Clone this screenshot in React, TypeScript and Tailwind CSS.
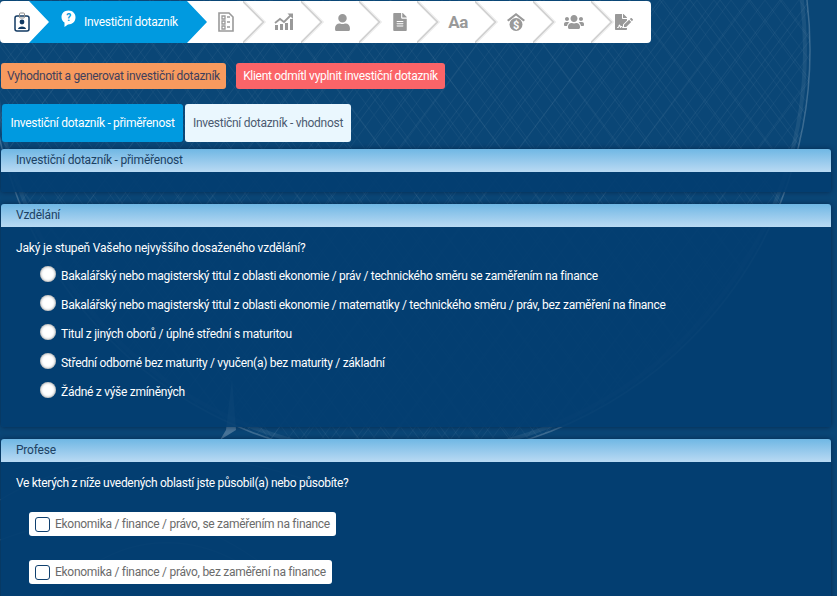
import { FaFileAlt, FaFileSignature, FaUser, FaUsers } from "react-icons/fa";

const FONT = "font-['Roboto',sans-serif]";

const EDUCATION = [
	"Bakalářský nebo magisterský titul z oblasti ekonomie / práv / technického směru se zaměřením na finance",
	"Bakalářský nebo magisterský titul z oblasti ekonomie / matematiky / technického směru / práv, bez zaměření na finance",
	"Titul z jiných oborů / úplné střední s maturitou",
	"Střední odborné bez maturity / vyučen(a) bez maturity / základní",
	"Žádné z výše zmíněných",
];

function Backdrop() {
	return (
		<svg className="absolute inset-0 h-full w-full" viewBox="0 0 837 596" aria-hidden>
			<defs>
				<pattern id="mesh" width="30" height="40" patternUnits="userSpaceOnUse">
					<path d="M0 0L30 40M30 0L0 40" stroke="#ffffff" strokeOpacity="0.1" strokeWidth="0.5" fill="none" />
				</pattern>
				<pattern id="mesh2" width="17" height="23" patternUnits="userSpaceOnUse">
					<path d="M0 0L17 23M17 0L0 23" stroke="#ffffff" strokeOpacity="0.07" strokeWidth="0.5" fill="none" />
				</pattern>
			</defs>
			<circle cx="400" cy="50" r="410" fill="url(#mesh)" />
			<circle cx="400" cy="50" r="410" fill="url(#mesh2)" />
			<circle cx="400" cy="50" r="410" fill="none" stroke="#ffffff" strokeOpacity="0.2" strokeWidth="1.5" />
			<circle cx="400" cy="50" r="405" fill="none" stroke="#ffffff" strokeOpacity="0.07" strokeWidth="4" />
			<path d="M0 500C80 450 220 440 330 490M0 540C110 500 200 500 300 596M60 596C110 530 210 520 280 596" stroke="#ffffff" strokeOpacity="0.12" fill="none" />
			<path d="M232 380L226 430L220 440L236 430Z" fill="#ffffff" fillOpacity="0.25" />
		</svg>
	);
}

function Chevron() {
	return (
		<svg className="absolute top-0 right-[-2px] h-[42px] w-[24px]" viewBox="0 0 24 42" aria-hidden>
			<path d="M0 0L21 21L0 42" fill="none" stroke="#d2d2d2" strokeWidth="2.5" />
			<path d="M1 0L22 21L1 42" fill="none" stroke="#ececec" strokeWidth="1" />
		</svg>
	);
}

function ChecklistIcon() {
	return (
		<svg width="16" height="20" viewBox="0 0 16 20" aria-hidden>
			<path d="M1 1H11L15 5V19H1Z" fill="#fff" stroke="#9a9a9a" strokeWidth="1.6" />
			<path d="M4 4H7V7H4ZM4 9H7V12H4ZM4 14H7V17H4ZM9 5H12M9 10H12M9 15H12" fill="none" stroke="#9a9a9a" strokeWidth="1.3" />
		</svg>
	);
}

function GrowthIcon() {
	return (
		<svg width="20" height="18" viewBox="0 0 20 18" aria-hidden>
			<path d="M1 17V12H4V17ZM6 17V11H9V17ZM11 17V10H14V17ZM16 17V6H19V17Z" fill="#999" />
			<path d="M1 10L6 6L10 9L17 2" fill="none" stroke="#999" strokeWidth="1.8" />
			<path d="M13.5 0.5H19V6Z" fill="#999" />
		</svg>
	);
}

function SavingsIcon() {
	return (
		<svg width="20" height="20" viewBox="0 0 20 20" aria-hidden>
			<path d="M1 8L10 1L19 8L17.5 9.5L10 3.6L2.5 9.5Z" fill="#999" />
			<circle cx="10" cy="12.5" r="6.5" fill="#999" />
			<text x="10" y="16.5" textAnchor="middle" fontSize="11" fontWeight="700" fill="#fff" fontFamily="Roboto, sans-serif">
				$
			</text>
		</svg>
	);
}

const STEPS = [
	<ChecklistIcon key="list" />,
	<GrowthIcon key="chart" />,
	<FaUser key="user" className="text-[17px] text-[#999]" />,
	<FaFileAlt key="file" className="text-[18px] text-[#999]" />,
	<span key="aa" className="text-[17px] leading-none font-bold tracking-[-0.5px] text-[#999]">
		Aa
	</span>,
	<SavingsIcon key="savings" />,
	<FaUsers key="users" className="text-[20px] text-[#999]" />,
];

function Stepper() {
	return (
		<nav className="flex h-[42px] w-[651px] rounded-[4px] bg-white">
			<div className="flex w-[29px] shrink-0 items-center justify-end">
				<svg className="mr-[-1px] shrink-0" width="16" height="20" viewBox="0 0 16 20" aria-hidden>
					<rect x="1" y="4" width="14" height="15" rx="2" fill="#fff" stroke="#123a63" strokeWidth="1.5" />
					<rect x="5.5" y="1" width="5" height="5" rx="1" fill="none" stroke="#8a8a8a" />
					<circle cx="8" cy="10" r="2.4" fill="#123a63" />
					<path d="M4 17C4 13.5 12 13.5 12 17Z" fill="#123a63" />
				</svg>
			</div>
			<div className="flex w-[178px] shrink-0 items-center bg-[#009ae0] pb-[4px] pl-[32px] text-white [clip-path:polygon(0_0,158px_0,178px_50%,158px_100%,0_100%,20px_50%)]">
				<svg width="15" height="20" viewBox="0 0 15 20" aria-hidden>
					<path d="M7.5 0.5C3.3 0.5 0.5 3.3 0.5 7C0.5 10 2 11.5 3.5 12.5V17L7 14.5C11.5 14.5 14.5 11.5 14.5 7.3C14.5 3.3 11.5 0.5 7.5 0.5Z" fill="#fff" />
					<text x="7.5" y="11" textAnchor="middle" fontSize="10" fontWeight="700" fill="#009ae0" fontFamily="Roboto, sans-serif">
						?
					</text>
				</svg>
				<span className="mt-[4px] ml-[8px] whitespace-nowrap text-[12px] tracking-[-0.3px]">Investiční dotazník</span>
			</div>
			{STEPS.map((icon, i) => (
				<div key={i} className="relative flex w-[58px] shrink-0 items-center justify-center pr-[20px]">
					{icon}
					<Chevron />
				</div>
			))}
			<div className="flex flex-1 items-center justify-center pr-[16px]">
				<FaFileSignature className="text-[18px] text-[#999]" />
			</div>
		</nav>
	);
}

function Panel({ title, className, children }: { title: string; className?: string; children?: React.ReactNode }) {
	return (
		<section className={`ml-px w-[830px] rounded-[3px] bg-[#033e71]/92 shadow-[0_0_5px_rgba(0,20,50,0.6)] ${className ?? ""}`}>
			<h2 className="h-[23px] rounded-t-[3px] bg-gradient-to-b from-[#6fb7e4] to-[#b9daf3] pl-[15px] text-[12px] leading-[23px] font-normal tracking-[-0.2px] text-[#1c4163]">
				{title}
			</h2>
			{children}
		</section>
	);
}

export default function App() {
	return (
		<div className={`relative h-screen overflow-hidden bg-[#0a4676] text-[12px] tracking-[-0.28px] ${FONT}`}>
			<Backdrop />
			<div className="relative pt-px">
				<Stepper />

				<div className="mt-[20px] flex gap-[10px] pl-px">
					<button className="h-[26px] w-[225px] rounded-[3px] bg-[#f79a5e] text-center text-[12px] tracking-[-0.3px] text-[#3f3f5c]">
						Vyhodnotit a generovat investiční dotazník
					</button>
					<button className="h-[26px] w-[209px] rounded-[3px] bg-[#fb6468] text-center text-[12px] tracking-[-0.3px] text-white">
						Klient odmítl vyplnit investiční dotazník
					</button>
				</div>

				<div className="mt-[15px] flex gap-[2px] pl-[2px]">
					<button className="h-[38px] w-[181px] rounded-[3px] bg-[#009ae0] text-[12px] text-white">
						Investiční dotazník - přiměřenost
					</button>
					<button className="h-[38px] w-[166px] rounded-[3px] bg-[#eaf7fe] text-[12px] text-[#4a5a70]">
						Investiční dotazník - vhodnost
					</button>
				</div>

				<Panel title="Investiční dotazník - přiměřenost" className="mt-[7px] h-[43px]" />

				<Panel title="Vzdělání" className="mt-[12px] h-[223px]">
					<p className="pt-[13px] pl-[15px] leading-[16px] tracking-[-0.18px] text-white">
						Jaký je stupeň Vašeho nejvyššího dosaženého vzdělání?
					</p>
					<ul className="mt-[10px] flex flex-col gap-[13px] pl-[39px]">
						{EDUCATION.map((label) => (
							<li key={label} className="flex h-[16px] items-center gap-[5px] whitespace-nowrap text-white">
								<input
									type="radio"
									name="education"
									className="h-[16px] w-[16px] shrink-0 appearance-none rounded-full bg-white shadow-[inset_0_0_3px_rgba(0,0,0,0.55)]"
								/>
								<span className="mt-[4px]">{label}</span>
							</li>
						))}
					</ul>
				</Panel>

				<Panel title="Profese" className="mt-[12px] pb-[40px]">
					<p className="pt-[13px] pl-[15px] leading-[16px] tracking-[-0.3px] text-white">
						Ve kterých z níže uvedených oblastí jste působil(a) nebo působíte?
					</p>
					<div className="mt-[21px] flex flex-col items-start gap-[24px] pl-[28px]">
						{["Ekonomika / finance / právo, se zaměřením na finance", "Ekonomika / finance / právo, bez zaměření na finance"].map((label) => (
							<label key={label} className="flex h-[24px] items-center gap-[5px] rounded-[3px] bg-white pr-[6px] pl-[6px] whitespace-nowrap text-[#6b6b6b]">
								<input type="checkbox" className="h-[15px] w-[15px] appearance-none rounded-[3px] border border-[#10406f] bg-white" />
								{label}
							</label>
						))}
					</div>
				</Panel>
			</div>
		</div>
	);
}
